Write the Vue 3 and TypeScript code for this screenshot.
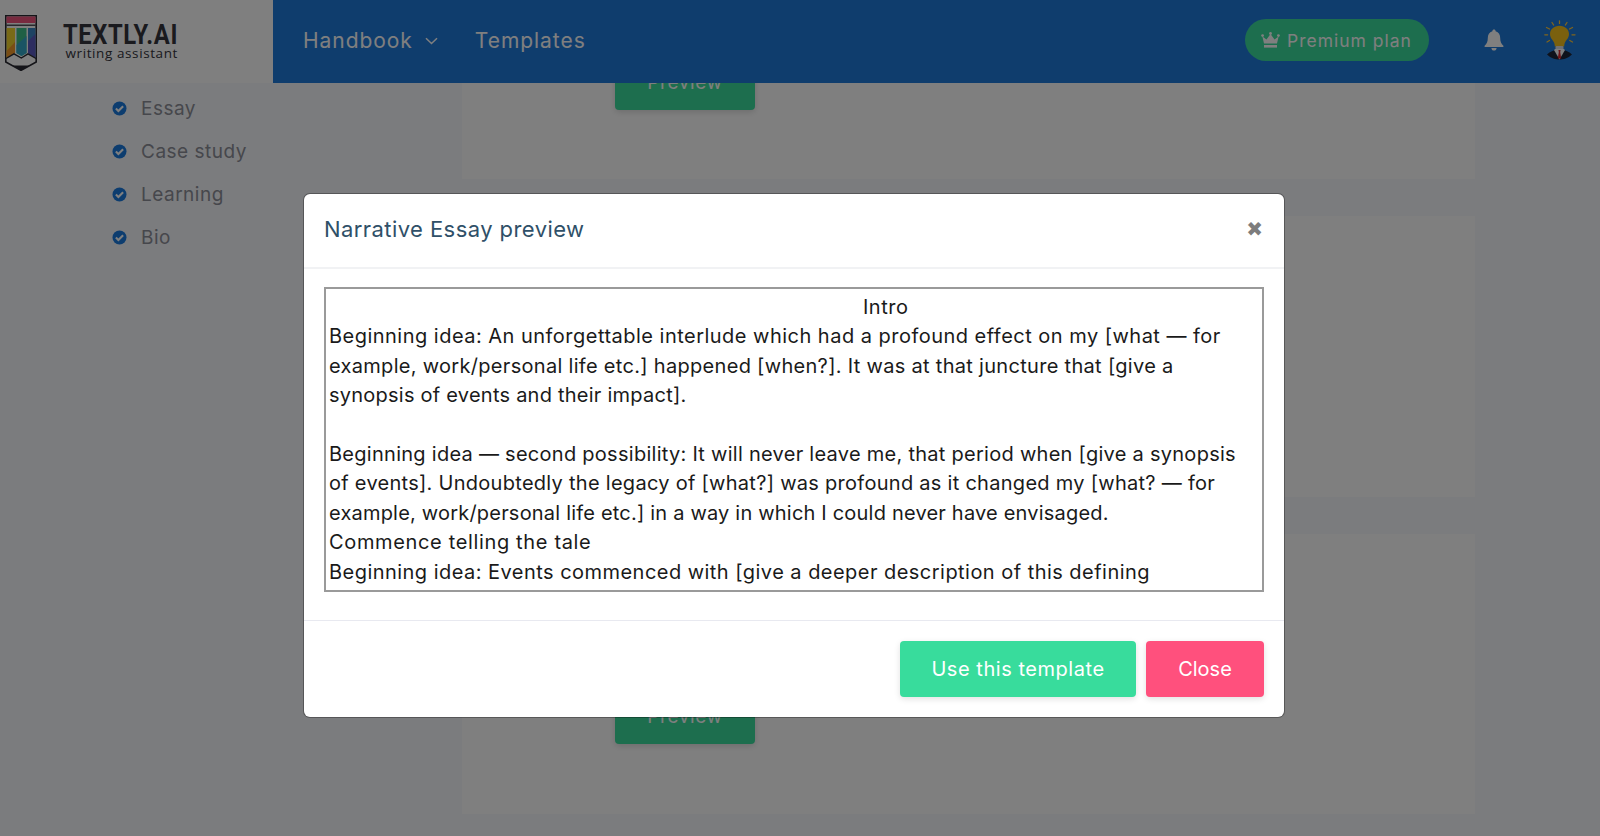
<script setup lang="ts">
interface DocLine { text: string; spacing: number }
const sideItems: string[] = ['Essay', 'Case study', 'Learning', 'Bio']
const lines: DocLine[] = [
  { text: 'Beginning idea: An unforgettable interlude which had a profound effect on my [what — for', spacing: 0.48 },
  { text: 'example, work/personal life etc.] happened [when?]. It was at that juncture that [give a', spacing: 0.305 },
  { text: 'synopsis of events and their impact].', spacing: 0.24 },
  { text: '\u00a0', spacing: 0 },
  { text: 'Beginning idea — second possibility: It will never leave me, that period when [give a synopsis', spacing: 0.273 },
  { text: 'of events]. Undoubtedly the legacy of [what?] was profound as it changed my [what? — for', spacing: 0.28 },
  { text: 'example, work/personal life etc.] in a way in which I could never have envisaged.', spacing: 0.2 },
  { text: 'Commence telling the tale', spacing: 0.65 },
  { text: 'Beginning idea: Events commenced with [give a deeper description of this defining', spacing: 0.465 },
]
</script>

<template>
  <div class="page">
    <header class="topbar">
      <div class="brand">
        <svg class="logo" width="32" height="56" viewBox="0 0 32 56">
          <path d="M0.8 0.8H31.2V47L16 55.4L0.8 47Z" fill="#fff" stroke="#2a2a33" stroke-width="1.6" />
          <rect x="1.5" y="1.5" width="29" height="6.5" fill="#f0557f" />
          <rect x="1.5" y="9.6" width="29" height="1.2" fill="#2a2a33" />
          <path d="M1.6 13H10V38L1.6 43Z" fill="#f3d52e" />
          <path d="M1.6 36L10 27V38L1.6 43Z" fill="#f59a2a" />
          <path d="M11.5 13H21.5V38L16.5 41L11.5 38Z" fill="#3fc08a" />
          <path d="M11.5 30L21.5 21V38L16.5 41L11.5 38Z" fill="#35a8c8" />
          <path d="M23 13H30.4V43L23 38Z" fill="#3d86c6" />
          <path d="M23 26L30.4 19V43L23 38Z" fill="#5a5ac0" />
          <path d="M1 43.5L9 38.8L16.3 43L23 38.8L31 43.5" fill="none" stroke="#2a2a33" stroke-width="1.4" />
          <path d="M7.5 50.4H24.5L16 55.6Z" fill="#2a2a33" />
        </svg>
        <div class="brand-text">
          <div class="brand-name"><span>TEXTLY.AI</span></div>
          <div class="brand-sub">writing assistant</div>
        </div>
      </div>
      <nav class="nav">
        <a class="nav-link">Handbook
          <svg class="caret" width="13" height="8" viewBox="0 0 13 8"><path d="M1 1.2L6.5 6.5L12 1.2" fill="none" stroke="#fff" stroke-width="1.5" /></svg>
        </a>
        <a class="nav-link">Templates</a>
      </nav>
      <div class="top-right">
        <div class="premium">
          <svg width="19" height="16" viewBox="0 0 19 16"><circle cx="1.6" cy="3.6" r="1.4" fill="#fff" /><circle cx="9.5" cy="1.5" r="1.4" fill="#fff" /><circle cx="17.4" cy="3.6" r="1.4" fill="#fff" /><path d="M1.4 4.5L5.5 7.5L9.5 2L13.5 7.5L17.6 4.5L16 11.5H3Z" fill="#fff" /><rect x="3" y="13" width="13" height="2.6" fill="#fff" /></svg>
          <span>Premium plan</span>
        </div>
        <svg class="bell" width="20" height="22" viewBox="0 0 20 22"><path d="M10 0.5C11 0.5 11.6 1.2 11.6 2.2C14.8 3 16.2 5.6 16.2 9C16.2 13 17.2 14.6 19.4 16.8V18H0.6V16.8C2.8 14.6 3.8 13 3.8 9C3.8 5.6 5.2 3 8.4 2.2C8.4 1.2 9 0.5 10 0.5ZM7.4 19H12.6C12.6 20.6 11.4 21.6 10 21.6C8.6 21.6 7.4 20.6 7.4 19Z" fill="#fff" /></svg>
        <svg class="avatar" width="32" height="40" viewBox="0 0 32 40">
          <g stroke="#ffc93a" stroke-width="1.3" stroke-linecap="round">
            <path d="M15.5 0.8V3.4M8 2.5L9.6 5M23 2.5L21.4 5M2.5 7.5L5.5 9M28.5 7.5L25.5 9M0.8 14.8H3.6M31 14.8H28M3 22L5.5 20.5M28.5 22L25.8 20.5" />
          </g>
          <path d="M3 34.5C6 31.5 10 30.4 12 29.5H19C21 30.4 25 31.5 28 34.5C24 38.5 19.5 39.6 15.5 39.6C11.5 39.6 7 38.5 3 34.5Z" fill="#1c2536" />
          <path d="M10 30L15.5 39.4L21 30L18 27.5H13Z" fill="#fff" />
          <path d="M14.4 30H16.6L16.2 32L17.2 38.6H13.8L14.8 32Z" fill="#d8262c" />
          <path d="M15.5 5.8C21 5.8 25 9.4 25 14C25 18 22.4 19.6 21 22.5C20.4 24 20.2 25 20.2 26.5H10.8C10.8 25 10.6 24 10 22.5C8.6 19.6 6 18 6 14C6 9.4 10 5.8 15.5 5.8Z" fill="#f4c01c" />
          <rect x="11.5" y="26" width="8" height="3" rx="1.2" fill="#dfe1e6" />
        </svg>
      </div>
    </header>

    <div class="body">
      <aside class="side">
        <ul class="side-list">
          <li v-for="item in sideItems" :key="item" class="side-item">
            <svg width="15" height="15" viewBox="0 0 15 15"><circle cx="7.5" cy="7.5" r="7" fill="#1a7adf" /><path d="M3.9 7.6L6.4 10.1L11.1 5.3" fill="none" stroke="#fff" stroke-width="2.1" /></svg>
            <span>{{ item }}</span>
          </li>
        </ul>
      </aside>
      <main class="content">
        <section class="card card-a"><button class="preview">Preview</button></section>
        <section class="card card-b"></section>
        <section class="card card-c"><button class="preview">Preview</button></section>
      </main>
    </div>

    <div class="backdrop">
      <div class="modal">
        <div class="modal-head">
          <h2>Narrative Essay preview</h2>
          <span class="close-x">✖</span>
        </div>
        <div class="modal-body">
          <div class="doc">
            <div class="doc-title">Intro</div>
            <div
              v-for="(line, i) in lines"
              :key="i"
              class="doc-line"
              :style="{ letterSpacing: line.spacing + 'px' }"
            >{{ line.text }}</div>
          </div>
        </div>
        <div class="modal-foot">
          <button class="btn btn-use">Use this template</button>
          <button class="btn btn-close">Close</button>
        </div>
      </div>
    </div>
  </div>
</template>

<style scoped>
.page {
  position: relative;
  width: 1600px;
  height: 836px;
  overflow: hidden;
  background: #f6f8fc;
  font-family: Inter, "Liberation Sans", sans-serif;
}
.topbar {
  position: relative;
  z-index: 2;
  display: flex;
  align-items: center;
  height: 83px;
  background: #1f7adb;
  box-sizing: border-box;
}
.brand {
  display: flex;
  align-items: center;
  width: 273px;
  height: 100%;
  flex: none;
  background: #fff;
  padding-left: 5px;
  box-sizing: border-box;
}
.logo { margin-top: 3px; }
.brand-text { margin-left: 24px; width: 117px; text-align: right; }
.brand-name {
  display: flex;
  justify-content: flex-end;
  font-family: Roboto, sans-serif;
  font-weight: 700;
  font-size: 27px;
  line-height: 24px;
  color: #34343c;
  letter-spacing: 0.7px;
  white-space: nowrap;
  transform: scaleX(0.88);
  transform-origin: right center;
}
.brand-sub {
  font-family: "Open Sans", sans-serif;
  font-size: 13.5px;
  line-height: 13px;
  color: #34343c;
  letter-spacing: 0.6px;
  white-space: nowrap;
}
.nav { display: flex; align-items: center; gap: 37px; margin-left: 30px; padding-bottom: 2px; }
.nav-link {
  display: flex;
  align-items: center;
  gap: 12px;
  color: #fff;
  font-size: 21px;
  letter-spacing: 0.95px;
}
.top-right { display: flex; align-items: center; margin-left: auto; padding: 0 24px 3px 0; }
.premium {
  display: flex;
  align-items: center;
  gap: 7px;
  height: 42px;
  width: 184px;
  box-sizing: border-box;
  padding-left: 16px;
  border-radius: 21px;
  background: #3bdc9d;
  color: #fff;
  font-size: 17.5px;
  letter-spacing: 1px;
}
.bell { margin-left: 55px; }
.avatar { margin-left: 40px; }
.body { display: flex; margin-top: -100px; }
.side { width: 462px; flex: none; padding-top: 104px; box-sizing: border-box; }
.side-list { list-style: none; margin: 0; padding: 0 0 0 112px; }
.side-item {
  display: flex;
  align-items: center;
  gap: 14px;
  height: 43px;
  font-size: 19px;
  letter-spacing: 0.5px;
  color: #8d8f98;
}
.content { width: 1013px; display: flex; flex-direction: column; gap: 37px; }
.card { background: #fff; box-sizing: border-box; padding-left: 153px; }
.card-a { height: 196px; padding-top: 71px; }
.card-b { height: 281px; }
.card-c { height: 280px; padding-top: 154px; }
.preview {
  display: block;
  width: 140px;
  height: 56px;
  border: 0;
  border-radius: 4px;
  background: #3bdc9d;
  color: #fff;
  font: inherit;
  font-size: 19px;
  letter-spacing: 0.6px;
  box-shadow: 0 2px 6px rgba(0,0,0,.15);
}
.backdrop {
  position: absolute;
  inset: 0;
  z-index: 5;
  display: flex;
  justify-content: flex-start;
  align-items: flex-start;
  padding: 194px 0 0 304px;
  box-sizing: border-box;
  background: rgba(0, 0, 0, 0.5);
}
.modal {
  width: 980px;
  height: 523px;
  background: #fff;
  border-radius: 6px;
  display: flex;
  flex-direction: column;
  box-sizing: border-box;
  box-shadow: 0 0 0 1px rgba(0,0,0,.3);
}
.modal-head {
  display: flex;
  align-items: center;
  justify-content: space-between;
  height: 75px;
  box-sizing: border-box;
  flex: none;
  padding: 0 21px 4px 20px;
  border-bottom: 2px solid #f1f2f4;
}
.modal-head h2 {
  margin: 0;
  font-weight: 400;
  font-size: 22px;
  color: #2f5068;
  letter-spacing: 0.43px;
}
.close-x { font-size: 20px; line-height: 20px; color: #7d7d7d; font-family: "DejaVu Sans", sans-serif; }
.modal-body { flex: 1; padding: 18px 20px 0; box-sizing: border-box; }
.doc {
  height: 305px;
  box-sizing: border-box;
  border: 2px solid #9a9a9a;
  padding: 4px 3px 0;
  overflow: hidden;
  color: #1a1a1a;
  font-size: 20px;
  letter-spacing: 0.49px;
  line-height: 29.4px;
  white-space: nowrap;
}
.doc-title { padding-left: 534px; }
.modal-foot {
  display: flex;
  justify-content: flex-end;
  gap: 10px;
  height: 97px;
  flex: none;
  box-sizing: border-box;
  padding: 20px 20px 0;
  border-top: 1px solid #e8e9f0;
}
.btn {
  height: 56px;
  border: 0;
  border-radius: 4px;
  color: #fff;
  font: inherit;
  font-size: 20px;
  box-shadow: 0 2px 6px rgba(0,0,0,.12);
}
.btn-use { width: 236px; background: #38dc9c; letter-spacing: 0.54px; }
.btn-close { width: 118px; background: #ff507d; }
</style>
